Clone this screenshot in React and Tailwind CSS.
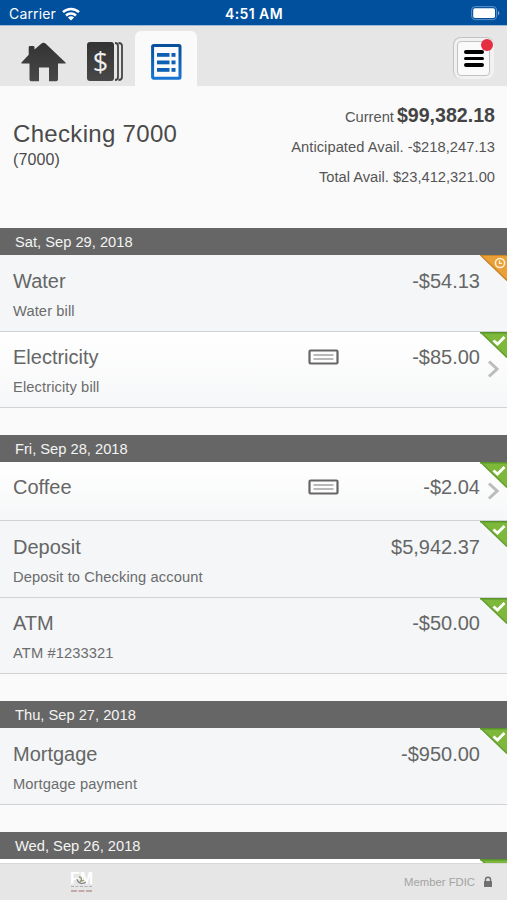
import React from 'react';

const groups = [
  {
    date: 'Sat, Sep 29, 2018',
    items: [
      { name: 'Water', memo: 'Water bill', amount: '-$54.13', status: 'pending' },
      { name: 'Electricity', memo: 'Electricity bill', amount: '-$85.00', status: 'posted', check: true },
    ],
  },
  {
    date: 'Fri, Sep 28, 2018',
    items: [
      { name: 'Coffee', amount: '-$2.04', status: 'posted', check: true },
      { name: 'Deposit', memo: 'Deposit to Checking account', amount: '$5,942.37', status: 'posted' },
      { name: 'ATM', memo: 'ATM #1233321', amount: '-$50.00', status: 'posted' },
    ],
  },
  {
    date: 'Thu, Sep 27, 2018',
    items: [
      { name: 'Mortgage', memo: 'Mortgage payment', amount: '-$950.00', status: 'posted' },
    ],
  },
  {
    date: 'Wed, Sep 26, 2018',
    items: [
      { name: '', memo: '', amount: '', status: 'posted', check: true },
    ],
  },
];

const StatusBar = () => (
  <div className="relative h-[26px] shrink-0 bg-[#00509d] border-b border-[#9dbbd9] px-[9px] flex items-center justify-between font-['Inter',sans-serif] text-white">
    <div className="flex items-center gap-[6px] pt-[2px]">
      <span className="text-[14px] leading-none tracking-[0.15px]">Carrier</span>
      <svg width="18" height="14" viewBox="0 0 18 14" fill="none" stroke="white" strokeWidth="2.5">
        <path d="M1 5.2C5.5 .9 12.500 .9 17 5.200" />
        <path d="M4 8.500C6.800 5.900 11.200 5.900 14 8.500" />
        <path d="M9 13.600L5.900 10.500C7.600 8.900 10.400 8.900 12.100 10.500Z" fill="white" stroke="none" />
      </svg>
    </div>
    <span className="absolute left-[225px] top-[7px] text-[14px] leading-[14px] tracking-[0.4px] font-semibold whitespace-nowrap">4:51 AM</span>
    <svg className="-mr-[3px] mt-px" width="30" height="15" viewBox="0 0 30 15">
      <rect x=".6" y=".6" width="25" height="13" rx="3.500" fill="none" stroke="#5f92c4" />
      <rect x="2.200" y="2.200" width="21.800" height="9.800" rx="1.800" fill="white" />
      <path d="M27 4.800c1.800.8 1.800 4 0 4.800z" fill="#7fa8d0" />
    </svg>
  </div>
);

const HomeIcon = () => (
  <svg width="45" height="40" viewBox="0 0 45 40">
    <defs>
      <linearGradient id="dark" x1="0" y1="0" x2="0" y2="1">
        <stop offset="0" stopColor="#333" />
        <stop offset="1" stopColor="#484848" />
      </linearGradient>
    </defs>
    <path
      d="M22.500 .8c-.8 0-1.500.3-2 .8L13.500 7.500V5.500c0-1-.6-1.500-1.500-1.500H9.200C8.300 4 7.700 4.500 7.700 5.500v7.200L.5 20.500c-.4.500-.2 1 .5 1h7.500v15.500c0 1.500.8 2.300 2.300 2.300h7.200V25.500h10v13.800h6.700c1.500 0 2.300-.8 2.300-2.300V21.500h7c.7 0 .9-.5.5-1L24.500 1.600c-.5-.5-1.200-.8-2-.8z"
      fill="url(#dark)"
    />
  </svg>
);

const AccountsIcon = () => (
  <div className="flex gap-[1px] h-[39px]">
    <div className="w-[27px] rounded-[3px] bg-linear-to-b from-[#333] to-[#484848] text-[#eee] flex items-center justify-center">
      <span className="text-[27px] leading-none font-['Open_Sans',sans-serif] -mt-px">$</span>
    </div>
    <svg width="8" height="39" viewBox="0 0 8 39" fill="none" stroke="#444" strokeWidth="1.800">
      <path d="M0 1c2 0 3 1 3 3v31c0 2-1 3-3 3" />
      <path d="M3.500 1C5.800 1 7 2 7 4v31c0 2-1.200 3-3.500 3" />
    </svg>
  </div>
);

const ListIcon = () => (
  <svg width="31" height="36" viewBox="0 0 31 36">
    <defs>
      <linearGradient id="blue" x1="0" y1="0" x2="0" y2="1">
        <stop offset="0" stopColor="#08509c" />
        <stop offset="1" stopColor="#1673d4" />
      </linearGradient>
    </defs>
    <rect x="1.600" y="1.600" width="27.400" height="32.600" rx="1" fill="#fafafa" stroke="url(#blue)" strokeWidth="3" />
    <g fill="#0c5fb4">
      <rect x="6" y="9" width="12.500" height="3.800" />
      <rect x="20.500" y="9" width="4" height="3.800" />
      <rect x="6" y="16.500" width="12.500" height="3.800" />
      <rect x="20.500" y="16.500" width="4" height="3.800" />
      <rect x="6" y="24" width="12.500" height="3.800" />
      <rect x="20.500" y="24" width="4" height="3.800" />
    </g>
  </svg>
);

const NavBar = () => (
  <div className="h-[60px] shrink-0 bg-[#e6e6e6] flex items-start pl-[21px] pr-[13px]">
    <div className="pt-[16px]"><HomeIcon /></div>
    <div className="pt-[16px] ml-[21px]"><AccountsIcon /></div>
    <div className="ml-[12px] mt-[5px] w-[62px] h-[55px] rounded-t-[6px] bg-[#fafafa] flex justify-center pt-[13px]">
      <ListIcon />
    </div>
    <div className="relative ml-auto mt-[11px] w-[41px] h-[42px] rounded-[8px] bg-[#f1f1f1] border-t border-l border-[#c4c4c4] p-[3px]">
      <div className="w-[33px] h-[35px] rounded-[4px] border border-[#c2c2c2] bg-[#fafafa] flex flex-col items-center justify-center gap-[3px]">
        <div className="w-[20px] h-[3.500px] rounded-full bg-black"></div>
        <div className="w-[20px] h-[3.500px] rounded-full bg-black"></div>
        <div className="w-[20px] h-[3.500px] rounded-full bg-black"></div>
      </div>
      <div className="absolute left-[27px] top-[1px] w-[12px] h-[12px] rounded-full bg-[#e52e42]"></div>
    </div>
  </div>
);

const AccountHeader = () => (
  <div className="h-[142px] shrink-0 flex justify-between pl-[13px] pr-[12px] text-[#4a4a4a]">
    <div className="pt-[34px]">
      <h1 className="text-[24px] leading-[28px] tracking-[0.32px]">Checking 7000</h1>
      <p className="text-[16px] leading-[20px] mt-[2px] tracking-[0.1px]">(7000)</p>
    </div>
    <div className="pt-[14px] text-right text-[14.700px] text-[#555]">
      <p className="h-[32px] leading-[30px]">
        Current<span className="ml-[3px] text-[19.600px] font-bold text-[#444]">$99,382.18</span>
      </p>
      <p className="h-[30px] leading-[30px] tracking-[0.05px]">Anticipated Avail. -$218,247.13</p>
      <p className="h-[30px] leading-[30px]">Total Avail. $23,412,321.00</p>
    </div>
  </div>
);

const PendingCorner = () => (
  <svg className="absolute right-0 top-0" width="27" height="27" viewBox="0 0 27 27">
    <path d="M0 0H27V26Z" fill="#eba037" />
    <path d="M0 0H27" stroke="#c98728" strokeWidth="2" />
    <path d="M1 .5L27 25.500" stroke="#c9862a" strokeWidth="1.500" />
    <circle cx="20" cy="8" r="4.600" fill="none" stroke="#fff3dc" strokeWidth="1.500" />
    <path d="M19.500 5.500V8.300H22" fill="none" stroke="#fff3dc" strokeWidth="1.200" />
  </svg>
);

const PostedCorner = () => (
  <svg className="absolute right-0 top-0" width="27" height="27" viewBox="0 0 27 27">
    <path d="M0 0H27V26Z" fill="#7db83a" />
    <path d="M0 .5H27" stroke="#58962a" strokeWidth="2" />
    <path d="M1 .5L27 25.500" stroke="#659e30" strokeWidth="1.500" />
    <path d="M13.500 8.500L17.500 12L24.500 5" fill="none" stroke="white" strokeWidth="2.800" />
  </svg>
);

const CheckImageIcon = () => (
  <svg className="absolute left-[308px] top-[17px]" width="31" height="16" viewBox="0 0 31 16">
    <rect x="1.500" y="1.500" width="28" height="13" rx="1" fill="#fdfdfd" stroke="#666" strokeWidth="2.200" />
    <path d="M5.500 6H25.500M5.500 10H25.500" stroke="#777" strokeWidth="1.200" />
  </svg>
);

const Transaction = ({ item }) => {
  const short = item.memo === undefined;
  return (
    <div
      className={`relative shrink-0 px-[13px] border-b border-[#d0d2d3] ${short ? 'h-[59px]' : 'h-[76.500px]'} ${item.check ? 'bg-linear-to-b from-white to-[#f6f7f8]' : 'bg-[#f4f6f8]'}`}
    >
      <div className={`flex justify-between pr-[14px] text-[20px] leading-[26px] text-[#666] ${short ? 'pt-[12px]' : 'pt-[12.500px]'}`}>
        <span>{item.name}</span>
        <span>{item.amount}</span>
      </div>
      {item.memo && <p className="mt-[7px] text-[14.700px] leading-[20px] tracking-[0.1px] text-[#6c6c6c]">{item.memo}</p>}
      {item.check && item.name && <CheckImageIcon />}
      {item.check && item.name && (
        <svg
          className={`absolute left-[487px] ${short ? 'top-[20px]' : 'top-[28px]'}`}
          width="12" height="18" viewBox="0 0 12 18" fill="none" stroke="#bcbcbc" strokeWidth="3"
        >
          <path d="M2 1.500L10 9L2 16.500" />
        </svg>
      )}
      {item.status === 'pending' ? <PendingCorner /> : <PostedCorner />}
    </div>
  );
};

const Footer = () => (
  <div className="h-[37px] shrink-0 bg-[#e6e6e6] border-t border-[#d8d8d8] flex items-center justify-between pl-[70px] pr-[14px]">
    <div className="w-[23px] h-[23px] flex flex-col items-center">
      <div className="relative w-[23px] h-[15px] flex items-center justify-between text-[16px] leading-[15px] font-bold text-white">
        <span>F</span>
        <span>M</span>
        <svg className="absolute left-[6px] top-[5px]" width="11" height="9" viewBox="0 0 11 9" fill="none">
          <path d="M1 3C1.500 7 6 9 10 6" stroke="#858585" strokeWidth="1.200" />
          <path d="M3 1C6 1 6 3 4.500 5.500L8 4" stroke="#96956c" strokeWidth="1.300" />
        </svg>
      </div>
      <div className="w-[21px] border-t border-dashed border-[#b0b0b0]"></div>
      <div className="w-[21px] mt-[3px] border-t-2 border-dashed border-[#c4a9a9]"></div>
    </div>
    <div className="flex items-center text-[11.300px] text-[#a3a3a3]">
      <span>Member FDIC</span>
      <svg className="ml-[8px]" width="10" height="12" viewBox="0 0 10 12">
        <path d="M2.500 6V3.500C2.500 .5 7.500 .5 7.500 3.500V6" fill="none" stroke="#707070" strokeWidth="1.500" />
        <rect x="1" y="5" width="8" height="6" rx=".6" fill="#707070" />
      </svg>
    </div>
  </div>
);

const App = () => {
  return (
    <div className="w-[507px] h-[900px] overflow-hidden flex flex-col bg-[#fafafa] font-['Liberation_Sans',Arial,sans-serif]">
      <StatusBar />
      <NavBar />
      <div className="flex-1 min-h-0 overflow-hidden flex flex-col">
        <AccountHeader />
        {groups.map((group) => (
          <div key={group.date} className="shrink-0 mb-[27px]">
            <div className="h-[27px] bg-[#666] pl-[15px] text-[14.700px] leading-[29px] text-[#f4f4f4]">{group.date}</div>
            {group.items.map((item, index) => (
              <Transaction key={index} item={item} />
            ))}
          </div>
        ))}
      </div>
      <Footer />
    </div>
  );
};

export default App;
